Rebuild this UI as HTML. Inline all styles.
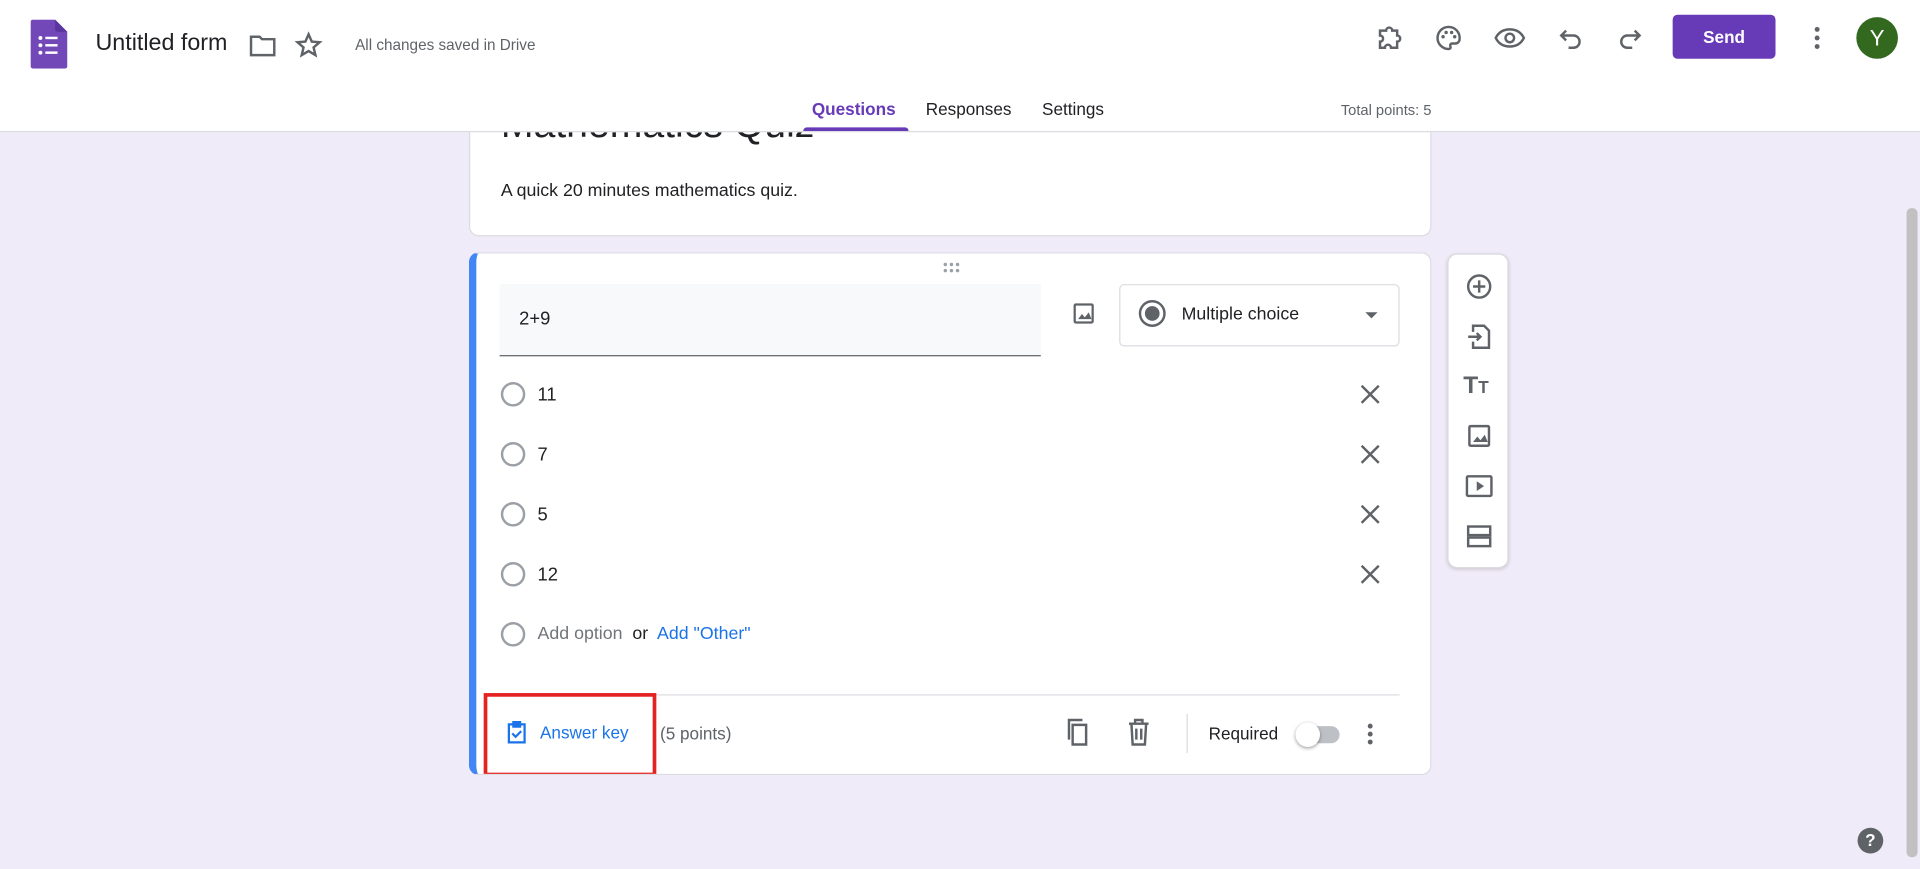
<!DOCTYPE html>
<html><head><meta charset="utf-8"><style>
*{box-sizing:border-box;margin:0;padding:0}
html,body{width:1920px;height:869px;overflow:hidden;background:#f0ebf8;font-family:"Liberation Sans",Arial,sans-serif}
#w{position:absolute;left:0;top:0;width:1568px;height:710px;transform:scale(1.22449);transform-origin:0 0;background:#f0ebf8}
.a{position:absolute}
.hdr{left:0;top:0;width:1568px;height:108px;background:#fff;border-bottom:1px solid #dadce0;z-index:10}
.ic{stroke:#5f6368;fill:none;stroke-width:2}
.card{background:#fff;border:1px solid #dadce0;border-radius:8px}
.t{font-size:15px;color:#202124}
.rad{width:20px;height:20px;border:2px solid #9aa0a6;border-radius:50%}
.x{stroke:#5f6368;stroke-width:2}
</style></head><body><div id="w">
<div class="a card" style="left:383px;top:60px;width:786px;height:133px;overflow:hidden">
  <div class="a" style="left:25px;top:22px;font-size:32px;color:#202124">Mathematics Quiz</div>
  <div class="a" style="left:25px;top:87px;font-size:14.5px;color:#202124">A quick 20 minutes mathematics quiz.</div>
</div>
<div class="a hdr">
  <svg class="a" style="left:25px;top:16px" width="30" height="40" viewBox="0 0 30 40"><path d="M2 0h18l10 10v28a2 2 0 0 1-2 2H2a2 2 0 0 1-2-2V2a2 2 0 0 1 2-2z" fill="#7248b9"/><path d="M20 0l10 10H22a2 2 0 0 1-2-2z" fill="#5a35a0"/><g fill="#fff"><circle cx="8" cy="15" r="1.6"/><circle cx="8" cy="21" r="1.6"/><circle cx="8" cy="27" r="1.6"/><rect x="12" y="14" width="10" height="2"/><rect x="12" y="20" width="10" height="2"/><rect x="12" y="26" width="10" height="2"/></g></svg>
  <div class="a" style="left:78px;top:25px;font-size:19px;color:#202124">Untitled form</div>
  <svg class="a" style="left:203px;top:26px" width="24" height="22"><path class="ic" d="M2 4h7l2 2h10v13H2z"/></svg>
  <svg class="a" style="left:240px;top:25px" width="24" height="24" viewBox="0 0 24 24"><path class="ic" stroke-width="1.6" d="M12 3l2.6 6 6.4.5-4.9 4.2 1.5 6.3L12 16.7 6.4 20l1.5-6.3L3 9.5l6.4-.5z"/></svg>
  <div class="a" style="left:290px;top:30px;font-size:12.5px;color:#5f6368">All changes saved in Drive</div>
  <svg class="a" style="left:1123px;top:19px" width="24" height="24" viewBox="0 0 24 24"><path class="ic" d="M4 6h5a2.5 2.5 0 0 1 5 0h4v4a2.5 2.5 0 0 1 0 5v5h-5a2.5 2.5 0 0 0-5 0H4v-5a2.5 2.5 0 0 0 0-5z"/></svg>
  <svg class="a" style="left:1171px;top:19px" width="24" height="24" viewBox="0 0 24 24"><path class="ic" d="M12 3a9 9 0 0 0 0 18c1.5 0 2-1 1.5-2s0-2.5 1.5-2.5h2.5A3.5 3.5 0 0 0 21 13 9 9 0 0 0 12 3z"/><g fill="#5f6368"><circle cx="7.5" cy="11" r="1.4"/><circle cx="10" cy="7.5" r="1.4"/><circle cx="14.5" cy="7.5" r="1.4"/><circle cx="17" cy="11" r="1.4"/></g></svg>
  <svg class="a" style="left:1220px;top:19px" width="26" height="24" viewBox="0 0 26 24"><path class="ic" d="M1.5 12C4 7 8 5 13 5s9 2 11.5 7C22 17 18 19 13 19S4 17 1.5 12z"/><circle class="ic" cx="13" cy="12" r="3.5"/></svg>
  <svg class="a" style="left:1271px;top:19px" width="24" height="24" viewBox="0 0 24 24"><path class="ic" d="M8 6L4 10l4 4M4 10h10a5 5 0 0 1 0 10h-4"/></svg>
  <svg class="a" style="left:1319px;top:19px" width="24" height="24" viewBox="0 0 24 24"><path class="ic" d="M16 6l4 4-4 4M20 10H10a5 5 0 0 0 0 10h4"/></svg>
  <div class="a" style="left:1366px;top:12px;width:84px;height:36px;background:#673ab7;border-radius:4px;color:#fff;font-weight:bold;font-size:14px;text-align:center;line-height:36px">Send</div>
  <svg class="a" style="left:1476px;top:20px" width="16" height="22"><g fill="#5f6368"><circle cx="8" cy="4" r="2"/><circle cx="8" cy="11" r="2"/><circle cx="8" cy="18" r="2"/></g></svg>
  <div class="a" style="left:1516px;top:14px;width:34px;height:34px;border-radius:50%;background:#33691e;color:#fff;text-align:center;line-height:34px;font-size:18px">Y</div>
  <div class="a" style="left:663px;top:81px;font-size:14px;color:#673ab7;font-weight:bold">Questions</div>
  <div class="a" style="left:656px;top:104px;width:86px;height:3px;background:#673ab7;border-radius:3px 3px 0 0"></div>
  <div class="a" style="left:756px;top:81px;font-size:14px;color:#202124">Responses</div>
  <div class="a" style="left:851px;top:81px;font-size:14px;color:#202124">Settings</div>
  <div class="a" style="left:1095px;top:83px;font-size:12px;color:#5f6368">Total points: 5</div>
</div>
<div class="a" style="left:1557px;top:170px;width:9px;height:530px;background:#c1c1c1;border-radius:4px"></div>
<div class="a card" style="left:383px;top:206px;width:786px;height:427px;border-left:6px solid #4285f4;overflow:hidden">
  <svg class="a" style="left:379px;top:7px" width="20" height="10"><g fill="#9aa0a6"><circle cx="4" cy="2" r="1.4"/><circle cx="9" cy="2" r="1.4"/><circle cx="14" cy="2" r="1.4"/><circle cx="4" cy="7" r="1.4"/><circle cx="9" cy="7" r="1.4"/><circle cx="14" cy="7" r="1.4"/></g></svg>
  <div class="a" style="left:19px;top:25px;width:442px;height:59px;background:#f8f9fa;border-bottom:1px solid #5f6368"></div>
  <div class="a t" style="left:35px;top:45px">2+9</div>
  <svg class="a" style="left:485px;top:38px" width="22" height="22" viewBox="0 0 24 24"><rect class="ic" x="4" y="4" width="16" height="16" rx="1"/><path d="M7 17l3.5-4.5 2.5 3 3.5-4.5 2.5 6z" fill="#5f6368"/></svg>
  <div class="a" style="left:525px;top:25px;width:229px;height:51px;border:1px solid #dadce0;border-radius:4px"></div>
  <div class="a" style="left:541px;top:38px;width:22px;height:22px;border:2px solid #5f6368;border-radius:50%"><div style="margin:3px;width:12px;height:12px;border-radius:50%;background:#5f6368"></div></div>
  <div class="a" style="left:576px;top:42px;font-size:14.5px;color:#202124">Multiple choice</div>
  <div class="a" style="left:726px;top:48px;border:5px solid transparent;border-top-color:#5f6368"></div>
  <div class="a rad" style="left:20px;top:105px"></div><div class="a t" style="left:50px;top:107px">11</div>
  <div class="a rad" style="left:20px;top:154px"></div><div class="a t" style="left:50px;top:156px">7</div>
  <div class="a rad" style="left:20px;top:203px"></div><div class="a t" style="left:50px;top:205px">5</div>
  <div class="a rad" style="left:20px;top:252px"></div><div class="a t" style="left:50px;top:254px">12</div>
  <svg class="a" style="left:721px;top:106px" width="18" height="18"><path class="x" d="M2 2l14 14M16 2L2 16"/></svg>
  <svg class="a" style="left:721px;top:155px" width="18" height="18"><path class="x" d="M2 2l14 14M16 2L2 16"/></svg>
  <svg class="a" style="left:721px;top:204px" width="18" height="18"><path class="x" d="M2 2l14 14M16 2L2 16"/></svg>
  <svg class="a" style="left:721px;top:253px" width="18" height="18"><path class="x" d="M2 2l14 14M16 2L2 16"/></svg>
  <div class="a rad" style="left:20px;top:301px"></div>
  <div class="a" style="left:50px;top:303px;font-size:14.5px;color:#70757a">Add option <span style="color:#202124">&nbsp;or&nbsp;</span> <span style="color:#1a73e8">Add "Other"</span></div>
  <div class="a" style="left:19px;top:360px;width:735px;height:1px;background:#dadce0"></div>
  <div class="a" style="left:6px;top:359px;width:141px;height:68px;border:3px solid #e52222"></div>
  <svg class="a" style="left:22px;top:380px" width="22" height="22" viewBox="0 0 24 24"><path d="M5 5h14v16H5z M9 3h6v4H9z" fill="none" stroke="#1a73e8" stroke-width="2"/><path d="M8 13l3 3 5-5" fill="none" stroke="#1a73e8" stroke-width="2"/></svg>
  <div class="a" style="left:52px;top:383px;font-size:14px;color:#1a73e8">Answer key</div>
  <div class="a" style="left:150px;top:384px;font-size:14px;color:#5f6368">(5 points)</div>
  <svg class="a" style="left:480px;top:379px" width="22" height="24" viewBox="0 0 22 24"><path class="ic" d="M7 6h11v16H7z M4 18V2h11"/></svg>
  <svg class="a" style="left:530px;top:379px" width="22" height="24" viewBox="0 0 22 24"><path class="ic" d="M3 5h16M8 5V2h6v3M5 5l1 17h10l1-17M9 9v9M13 9v9"/></svg>
  <div class="a" style="left:580px;top:376px;width:1px;height:32px;background:#dadce0"></div>
  <div class="a" style="left:598px;top:384px;font-size:14px;color:#202124">Required</div>
  <div class="a" style="left:671px;top:386px;width:34px;height:14px;border-radius:7px;background:#bdc1c6"></div>
  <div class="a" style="left:669px;top:383px;width:20px;height:20px;border-radius:50%;background:#fff;box-shadow:0 1px 3px rgba(0,0,0,.4)"></div>
  <svg class="a" style="left:722px;top:382px" width="16" height="22"><g fill="#5f6368"><circle cx="8" cy="4" r="2"/><circle cx="8" cy="10.5" r="2"/><circle cx="8" cy="17" r="2"/></g></svg>
</div>
<div class="a card" style="left:1182px;top:207px;width:50px;height:257px;box-shadow:0 1px 3px rgba(0,0,0,.15)">
  <svg class="a" style="left:13px;top:14px" width="24" height="24" viewBox="0 0 24 24"><circle class="ic" cx="12" cy="12" r="9"/><path class="ic" d="M12 7v10M7 12h10"/></svg>
  <svg class="a" style="left:13px;top:55px" width="24" height="24" viewBox="0 0 24 24"><path class="ic" d="M7 8V3h9l4 4v14H7v-5M3 12h10M10 9l3 3-3 3"/></svg>
  <div class="a" style="left:12px;top:96px;font-size:20px;font-weight:bold;color:#5f6368">T<span style="font-size:14px">T</span></div>
  <svg class="a" style="left:13px;top:136px" width="24" height="24" viewBox="0 0 24 24"><rect class="ic" x="4" y="4" width="16" height="16" rx="1"/><path d="M7 17l3.5-4.5 2.5 3 3.5-4.5 2.5 6z" fill="#5f6368"/></svg>
  <svg class="a" style="left:13px;top:177px" width="24" height="24" viewBox="0 0 24 24"><rect class="ic" x="2" y="4" width="20" height="16" rx="1"/><path d="M10 8v8l6-4z" fill="#5f6368"/></svg>
  <svg class="a" style="left:13px;top:218px" width="24" height="24" viewBox="0 0 24 24"><rect class="ic" x="3" y="4" width="18" height="7"/><rect class="ic" x="3" y="13" width="18" height="7"/></svg>
</div>
<div class="a" style="left:1517px;top:676px;width:21px;height:21px;border-radius:50%;background:#5f6368;color:#fff;font-weight:bold;font-size:14px;text-align:center;line-height:21px">?</div>
</div></body></html>
